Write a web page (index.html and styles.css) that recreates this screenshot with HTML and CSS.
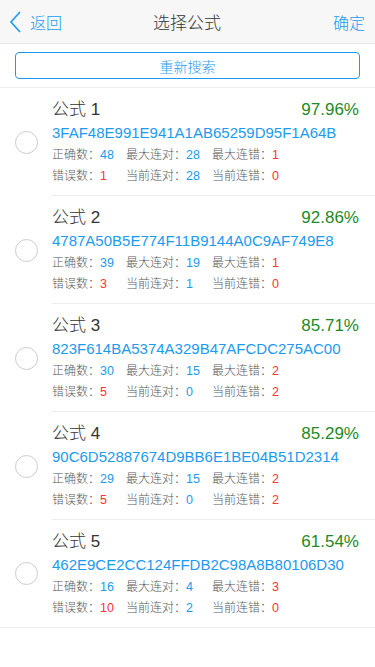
FILE: index.html
```
<!DOCTYPE html>
<html lang="zh-CN">
<head>
<meta charset="UTF-8">
<meta name="viewport" content="width=device-width, initial-scale=1.0">
<link rel="stylesheet" href="styles.css">
<title>选择公式</title>
</head>
<body>
    <div class="app">
        <div class="header">
            <a class="back">
                <svg width="14" height="22" viewBox="0 0 14 22"><path d="M11 1 L2 11 L11 21" fill="none" stroke="#1b9af0" stroke-width="1.6"/></svg>
                <span>返回</span>
            </a>
            <div class="title">选择公式</div>
            <a class="ok">确定</a>
        </div>
        <div class="search-bar">
            <button class="research">重新搜索</button>
        </div>
        <div class="list">
            <div class="item">
                <div class="radio"></div>
                <div class="info">
                    <div class="top"><span class="name">公式 1</span><span class="rate">97.96%</span></div>
                    <div class="hash">3FAF48E991E941A1AB65259D95F1A64B</div>
                    <div class="stats">
                        <span>正确数：<b class="blue">48</b></span><span>最大连对：<b class="blue">28</b></span><span>最大连错：<b class="red">1</b></span>
                        <span>错误数：<b class="red">1</b></span><span>当前连对：<b class="blue">28</b></span><span>当前连错：<b class="red">0</b></span>
                    </div>
                </div>
            </div>
            <div class="item">
                <div class="radio"></div>
                <div class="info">
                    <div class="top"><span class="name">公式 2</span><span class="rate">92.86%</span></div>
                    <div class="hash">4787A50B5E774F11B9144A0C9AF749E8</div>
                    <div class="stats">
                        <span>正确数：<b class="blue">39</b></span><span>最大连对：<b class="blue">19</b></span><span>最大连错：<b class="red">1</b></span>
                        <span>错误数：<b class="red">3</b></span><span>当前连对：<b class="blue">1</b></span><span>当前连错：<b class="red">0</b></span>
                    </div>
                </div>
            </div>
            <div class="item">
                <div class="radio"></div>
                <div class="info">
                    <div class="top"><span class="name">公式 3</span><span class="rate">85.71%</span></div>
                    <div class="hash">823F614BA5374A329B47AFCDC275AC00</div>
                    <div class="stats">
                        <span>正确数：<b class="blue">30</b></span><span>最大连对：<b class="blue">15</b></span><span>最大连错：<b class="red">2</b></span>
                        <span>错误数：<b class="red">5</b></span><span>当前连对：<b class="blue">0</b></span><span>当前连错：<b class="red">2</b></span>
                    </div>
                </div>
            </div>
            <div class="item">
                <div class="radio"></div>
                <div class="info">
                    <div class="top"><span class="name">公式 4</span><span class="rate">85.29%</span></div>
                    <div class="hash">90C6D52887674D9BB6E1BE04B51D2314</div>
                    <div class="stats">
                        <span>正确数：<b class="blue">29</b></span><span>最大连对：<b class="blue">15</b></span><span>最大连错：<b class="red">2</b></span>
                        <span>错误数：<b class="red">5</b></span><span>当前连对：<b class="blue">0</b></span><span>当前连错：<b class="red">2</b></span>
                    </div>
                </div>
            </div>
            <div class="item">
                <div class="radio"></div>
                <div class="info">
                    <div class="top"><span class="name">公式 5</span><span class="rate">61.54%</span></div>
                    <div class="hash">462E9CE2CC124FFDB2C98A8B80106D30</div>
                    <div class="stats">
                        <span>正确数：<b class="blue">16</b></span><span>最大连对：<b class="blue">4</b></span><span>最大连错：<b class="red">3</b></span>
                        <span>错误数：<b class="red">10</b></span><span>当前连对：<b class="blue">2</b></span><span>当前连错：<b class="red">0</b></span>
                    </div>
                </div>
            </div>
        </div>
    </div>
</body>
</html>
```
FILE: styles.css
```
html, body {
    margin: 0;
    padding: 0;
    background-color: #fff;
    font-family: "Liberation Sans", "Noto Sans CJK SC", sans-serif;
    font-weight: 300;
    color: #333;
}
.header {
    height: 43px;
    background-color: #f7f7f7;
    border-bottom: 1px solid #e8e8e8;
    display: flex;
    align-items: center;
    justify-content: space-between;
    padding: 0 10px 0 9px;
}
.back {
    display: flex;
    align-items: center;
    gap: 7px;
    color: #1b9af0;
    font-size: 16px;
    width: 80px;
}
.back svg {
    display: block;
}
.title {
    font-size: 17px;
    color: #333;
}
.ok {
    color: #1b9af0;
    font-size: 16px;
    width: 80px;
    text-align: right;
}
.search-bar {
    padding: 8px 15px 8px 15px;
    border-bottom: 1px solid #eee;
}
.research {
    display: block;
    width: 100%;
    height: 27px;
    background-color: #fff;
    border: 1px solid #1b9af0;
    border-radius: 4px;
    color: #1b9af0;
    font-size: 14px;
    font-weight: 300;
    font-family: "Liberation Sans", "Noto Sans CJK SC", sans-serif;
    padding: 0;
}
.item {
    display: flex;
    align-items: center;
}
.item:last-child {
    border-bottom: 1px solid #eee;
}
.radio {
    width: 21px;
    height: 21px;
    border: 1px solid #ccc;
    border-radius: 50%;
    margin: 0 14px 0 15px;
    flex-shrink: 0;
}
.info {
    flex: 1;
    padding: 11px 16px 8px 0;
    border-bottom: 1px solid #eee;
}
.item:last-child .info {
    border-bottom: none;
}
.top {
    display: flex;
    justify-content: space-between;
    line-height: 22px;
    height: 22px;
}
.name {
    font-size: 17px;
    color: #333;
}
.rate {
    font-size: 17px;
    color: #1e8a28;
}
.hash {
    font-size: 15px;
    line-height: 23px;
    height: 23px;
    color: #1b9af0;
}
.stats {
    display: grid;
    grid-template-columns: 74px 86px auto;
    grid-auto-rows: 21px;
    font-size: 12px;
    line-height: 21px;
    color: #5a5a5a;
    padding-top: 1px;
}
.stats b {
    font-weight: normal;
    font-size: 12.5px;
    line-height: 1;
}
.blue {
    color: #1b9af0;
}
.red {
    color: #f33;
}
```
